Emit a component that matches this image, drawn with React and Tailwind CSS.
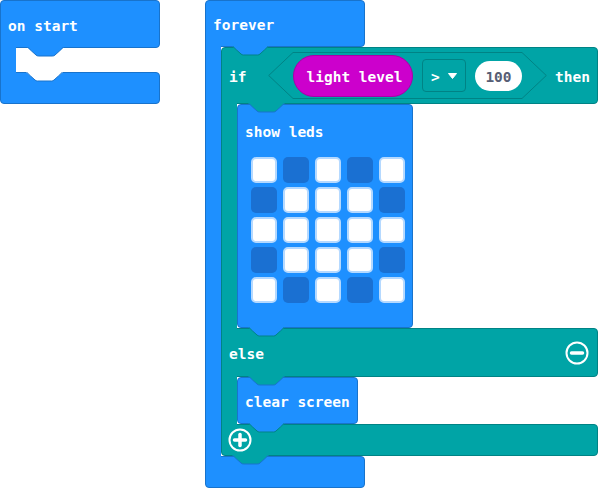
import React from 'react';

// tab that sticks out under a block and fills the notch of what follows
function Tab({ fill, stroke, className }) {
  return (
    <svg
      className={`absolute top-full z-10 ${className}`}
      width="37"
      height="10"
      viewBox="0 0 37 10"
    >
      <path d="M0 0 C3 2.5 6 5.5 9 8 Q10 9 11.5 9 L25.5 9 Q27 9 28 8 C31 5.5 34 2.5 37 0 Z" fill={fill} />
      <path
        d="M0.5 0 C3 2.5 6 5.5 9 8 Q10 9 11.5 9 L25.5 9 Q27 9 28 8 C31 5.5 34 2.5 36.5 0"
        fill="none"
        stroke={stroke}
        strokeWidth="1"
      />
    </svg>
  );
}

const LEDS = [
  [1, 0, 1, 0, 1],
  [0, 1, 1, 1, 0],
  [1, 1, 1, 1, 1],
  [0, 1, 1, 1, 0],
  [1, 0, 1, 0, 1],
];

function CircleIcon({ plus }) {
  return (
    <svg width="24" height="24" viewBox="0 0 24 24">
      <circle cx="12" cy="12" r="10.5" fill="none" stroke="white" strokeWidth="2" />
      <line x1="6.5" y1="12" x2="17.5" y2="12" stroke="white" strokeWidth="3.5" strokeLinecap="round" />
      {plus && (
        <line x1="12" y1="6.5" x2="12" y2="17.5" stroke="white" strokeWidth="3.5" strokeLinecap="round" />
      )}
    </svg>
  );
}

function ShowLeds() {
  return (
    <div className="relative w-[176px] h-[224px] bg-[#1e90ff] border border-[#1873cc] rounded-[4px] flex flex-col">
      <div className="h-[52px] flex items-center pl-[7px]">
        <span className="pt-[2px]">show leds</span>
      </div>
      <div className="grid grid-cols-5 gap-x-[6px] gap-y-[4px] pl-[13px] w-fit">
        {LEDS.flat().map((on, i) =>
          on ? (
            <div key={i} className="w-[26px] h-[26px] rounded-[5px] bg-white border-2 border-[#b5d9ff]" />
          ) : (
            <div key={i} className="w-[26px] h-[26px] rounded-[5px] bg-[#1a70d2]" />
          )
        )}
      </div>
      <Tab fill="#1e90ff" stroke="#008385" className="left-[10px]" />
    </div>
  );
}

function Condition() {
  return (
    <div className="relative w-[279px] h-[47px] flex items-center pl-[25px]">
      <svg className="absolute inset-0" width="279" height="47" viewBox="0 0 279 47">
        <path
          d="M0.7 23.5 L25 0.5 L254 0.5 L278.3 23.5 L254 46.5 L25 46.5 Z"
          fill="#00a4a6"
          stroke="#008385"
          strokeWidth="1"
        />
      </svg>
      <div className="relative w-[120px] h-[42px] rounded-full bg-[#cc00cc] border border-[#a800a8] flex items-center justify-center pl-[3px] pt-[4px]">
        light level
      </div>
      <div className="relative ml-[9px] w-[44px] h-[33px] rounded-[4px] border border-[#008385] flex items-center gap-[8px] pl-[8px]">
        <span className="pt-[4px]">&gt;</span>
        <svg width="9" height="6" viewBox="0 0 9 6">
          <path d="M0.5 0.5 L8.5 0.5 L4.5 5.5 Z" fill="white" stroke="white" strokeLinejoin="round" />
        </svg>
      </div>
      <div className="relative ml-[9px] w-[47px] h-[30px] rounded-full bg-white text-[#575e75] flex items-center justify-center pt-[4px]">
        100
      </div>
    </div>
  );
}

function IfElse() {
  return (
    <div className="w-[377px] flex flex-col">
      <div className="relative h-[57px] bg-[#00a4a6] border border-[#008385] rounded-t-[4px] rounded-br-[4px] flex items-center pl-[7px]">
        <span className="w-[39px] pt-[4px]">if</span>
        <Condition />
        <span className="ml-[8px] pt-[4px]">then</span>
        <Tab fill="#00a4a6" stroke="#1873cc" className="left-[26px]" />
      </div>
      <div className="flex">
        <div className="relative z-[1] -my-px w-[16px] bg-[#00a4a6] border-l border-[#008385]" />
        <ShowLeds />
      </div>
      <div className="relative h-[49px] bg-[#00a4a6] border border-[#008385] rounded-r-[4px] flex items-center justify-between pl-[7px] pr-[8px]">
        <span className="pt-[3px]">else</span>
        <CircleIcon />
        <Tab fill="#00a4a6" stroke="#1873cc" className="left-[26px]" />
      </div>
      <div className="flex">
        <div className="relative z-[1] -my-px w-[16px] bg-[#00a4a6] border-l border-[#008385]" />
        <div className="relative w-[121px] h-[47px] bg-[#1e90ff] border border-[#1873cc] rounded-[4px] flex items-center pl-[7px]">
          <span className="pt-[4px]">clear screen</span>
          <Tab fill="#1e90ff" stroke="#008385" className="left-[10px]" />
        </div>
      </div>
      <div className="relative h-[32px] bg-[#00a4a6] border border-[#008385] rounded-r-[4px] rounded-bl-[4px] flex items-center pl-[6px]">
        <CircleIcon plus />
        <Tab fill="#00a4a6" stroke="#1873cc" className="left-[10px]" />
      </div>
    </div>
  );
}

export default function App() {
  return (
    <div className="relative w-[598px] h-[489px] overflow-hidden bg-white text-white font-bold text-[14.5px] leading-none font-['DejaVu_Sans_Mono',monospace]">
      {/* on start */}
      <div className="absolute left-0 top-0 w-[160px] flex flex-col">
        <div className="relative h-[48px] bg-[#1e90ff] border border-[#1873cc] rounded-t-[4px] rounded-br-[4px] flex items-center pl-[7px] pt-[4px]">
          on start
          <Tab fill="#1e90ff" stroke="#1873cc" className="left-[26px]" />
        </div>
        <div className="flex h-[24px]">
          <div className="relative z-[1] -my-px w-[16px] bg-[#1e90ff] border-l border-[#1873cc]" />
          <div className="relative flex-1">
            <Tab fill="#ffffff" stroke="#1873cc" className="left-[10px]" />
          </div>
        </div>
        <div className="h-[32px] bg-[#1e90ff] border border-[#1873cc] rounded-b-[4px] rounded-tr-[4px]" />
      </div>

      {/* forever */}
      <div className="absolute left-[205px] top-0 flex flex-col">
        <div className="relative w-[160px] h-[47px] bg-[#1e90ff] border border-[#1873cc] rounded-t-[4px] rounded-br-[4px] flex items-center pl-[7px] pt-[4px]">
          forever
          <Tab fill="#1e90ff" stroke="#008385" className="left-[26px]" />
        </div>
        <div className="flex">
          <div className="relative z-[1] -my-px w-[16px] bg-[#1e90ff] border-l border-[#1873cc]" />
          <IfElse />
        </div>
        <div className="w-[160px] h-[32px] bg-[#1e90ff] border border-[#1873cc] rounded-b-[4px] rounded-tr-[4px]" />
      </div>
    </div>
  );
}
